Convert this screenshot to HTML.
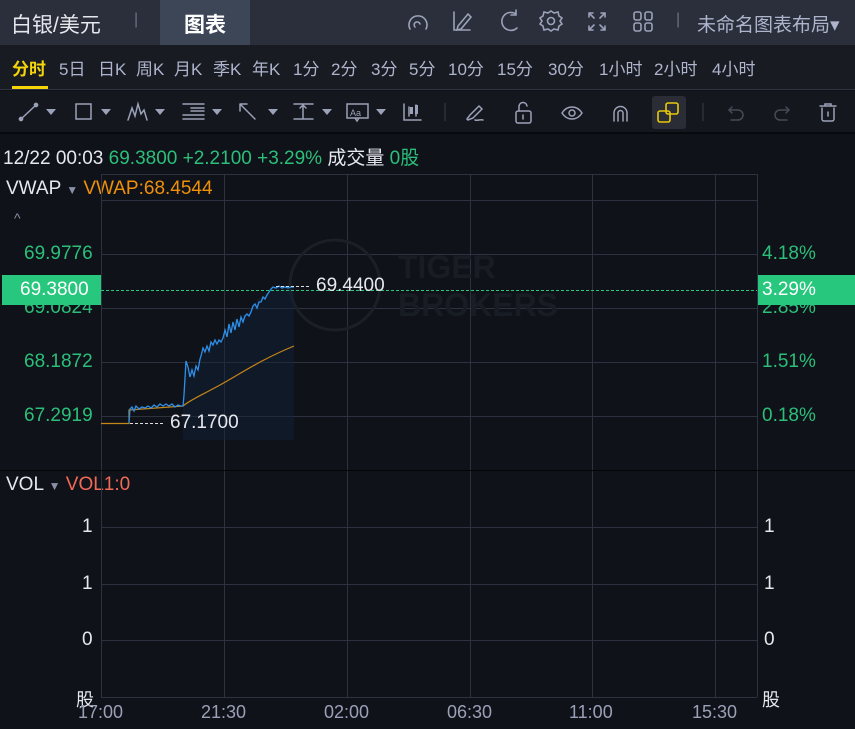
<!DOCTYPE html>
<html><head><meta charset="utf-8"><style>
*{margin:0;padding:0;box-sizing:border-box}
body{width:855px;height:729px;background:#0f1218;font-family:"Liberation Sans","Noto Sans CJK SC",sans-serif;position:relative;overflow:hidden;color:#c9ccd6}
.a{position:absolute;white-space:nowrap}
#top{position:absolute;left:0;top:0;width:855px;height:45px;background:#2a2f3b}
#tf{position:absolute;left:0;top:45px;width:855px;height:45px;background:#181b22;border-bottom:1px solid #2e3340}
#tb{position:absolute;left:0;top:91px;width:855px;height:43px;background:#14171d;border-bottom:2px solid #08090c}
.tf{top:55px;font-size:17px;color:#aeb4cc}
.g{color:#2bbf7a}
svg{position:absolute;left:0;top:0}
.y{font-size:19px}
</style></head><body>
<div id="top"></div>
<div class="a" style="left:160px;top:0;width:90px;height:45px;background:#3d4656"></div>
<div class="a" style="left:11px;top:9px;font-size:21px;color:#e6e8ee">白银/美元</div>
<div class="a" style="left:134px;top:11px;font-size:16px;color:#6b7080">|</div>
<div class="a" style="left:184px;top:9px;font-size:21px;font-weight:bold;color:#fff">图表</div>
<div class="a" style="left:676px;top:11px;font-size:16px;color:#6b7080">|</div>
<div class="a" style="left:697px;top:10px;font-size:19px;color:#aeb4cc">未命名图表布局▾</div>
<div id="tf"></div>
<div class="a tf" style="left:12px;color:#f5d50a;font-weight:bold">分时</div>
<div class="a" style="left:12px;top:86px;width:36px;height:3px;background:#f5d50a"></div>
<div class="a tf" style="left:59px">5日</div>
<div class="a tf" style="left:98px">日K</div>
<div class="a tf" style="left:136px">周K</div>
<div class="a tf" style="left:174px">月K</div>
<div class="a tf" style="left:213px">季K</div>
<div class="a tf" style="left:252px">年K</div>
<div class="a tf" style="left:293px">1分</div>
<div class="a tf" style="left:331px">2分</div>
<div class="a tf" style="left:371px">3分</div>
<div class="a tf" style="left:409px">5分</div>
<div class="a tf" style="left:448px">10分</div>
<div class="a tf" style="left:497px">15分</div>
<div class="a tf" style="left:548px">30分</div>
<div class="a tf" style="left:599px">1小时</div>
<div class="a tf" style="left:654px">2小时</div>
<div class="a tf" style="left:712px">4小时</div>
<div id="tb"></div>
<div class="a" style="left:652px;top:96px;width:34px;height:33px;background:#2a2d35;border-radius:3px"></div>
<div class="a" style="left:3px;top:143px;font-size:19px;color:#e6e8ee">12/22 00:03 <span class="g">69.3800 +2.2100 +3.29%</span> 成交量 <span class="g">0股</span></div>
<div class="a" style="left:6px;top:178px;font-size:19px;color:#e6e8ee">VWAP <span style="color:#8a90a6;font-size:12px">▼</span> <span style="color:#f0900a">VWAP:68.4544</span></div>
<div class="a" style="left:6px;top:474px;font-size:19px;color:#e6e8ee">VOL <span style="color:#8a90a6;font-size:12px">▼</span> <span style="color:#f06a55">VOL1:0</span></div>
<svg width="855" height="729">
<g fill="none" stroke="#9ba1b8" stroke-width="1.6" stroke-linecap="round">
<path d="M410 29a9 9 0 1 1 16 0M415 27a3 3 0 1 1 5-3"/>
<path d="M454 12v18h16M458 26l10-12 3 3-10 12-4 1z"/>
<path d="M516 14a9 9 0 1 0 1 14M516 10v5h-5"/>
<circle cx="551" cy="21" r="3.5"/><path d="M551 11l3 2 4-1 1 4 3 2-2 3 2 3-3 2-1 4-4-1-3 2-3-2-4 1-1-4-3-2 2-3-2-3 3-2 1-4 4 1z"/>
<path d="M589 13l5 5M589 13h4M589 13v4M605 13l-5 5M605 13h-4M605 13v4M589 30l5-5M589 30h4M589 30v-4M605 30l-5-5M605 30h-4M605 30v-4"/>
<rect x="634" y="12" width="7" height="8" rx="2"/><rect x="645" y="12" width="7" height="8" rx="2"/><rect x="634" y="23" width="7" height="8" rx="2"/><rect x="645" y="23" width="7" height="8" rx="2"/>
</g>
<g fill="none" stroke="#9ba1b8" stroke-width="1.5" stroke-linecap="round">
<path d="M21 119l15-14"/><circle cx="21" cy="119" r="1.6" fill="#9ba1b8"/><circle cx="36" cy="105" r="1.6" fill="#9ba1b8"/>
<rect x="76" y="104" width="15" height="15"/>
<path d="M128 120l4-12 3 8 3-12 3 10 3-4 3 10"/>
<path d="M183 104h21M191 108h13M191 111h13M183 115h21M183 119h21"/>
<path d="M240 104l15 15M240 104v7M240 104h7"/>
<path d="M294 104h19M303 104v15M294 119h19M300 108l3-3 3 3"/>
<rect x="347" y="104" width="21" height="14"/><path d="M355 118l2 3 2-3"/>
<path d="M404 104v16h17M409 107v9M416 105v11"/>
<path d="M467 119l3-4 9-9 3 3-9 9-5 2zM475 120c3 1 5-1 8 0"/>
<rect x="516" y="111" width="15" height="12" rx="2"/><path d="M519 111v-4a4 4 0 0 1 8-1M523 115v4"/>
<path d="M562 113c5-8 15-8 20 0c-5 8-15 8-20 0z"/><circle cx="572" cy="113" r="3"/>
<path d="M614 121v-8a6.5 6.5 0 0 1 13 0v8M618 121v-8a2.5 2.5 0 0 1 5 0v8"/>
<path d="M732 107l-3 3 3 3M729 110h9a5 5 0 0 1 0 10h-7" stroke="#454a57"/>
<path d="M786 107l3 3-3 3M789 110h-9a5 5 0 0 0 0 10h7" stroke="#454a57"/>
<path d="M820 106h16M825 106v-2h6v2M822 108v11a2 2 0 0 0 2 2h8a2 2 0 0 0 2-2v-11M828 112v4"/>
</g>
<g fill="#9ba1b8"><path d="M46 109h10l-5 6z"/><path d="M101 109h10l-5 6z"/><path d="M155 109h10l-5 6z"/><path d="M212 109h10l-5 6z"/><path d="M268 109h10l-5 6z"/><path d="M322 109h10l-5 6z"/><path d="M376 109h10l-5 6z"/></g>
<text x="350" y="116" font-size="9" fill="#9ba1b8" font-family="Liberation Sans">Aa</text>
<g fill="#9ba1b8"><rect x="410" y="107" width="3" height="7"/><rect x="415" y="105" width="3" height="9"/></g>
<path d="M445 103v18M703 103v18" stroke="#3a3e48"/>
<g fill="none" stroke="#e8c90a" stroke-width="1.6"><rect x="658" y="111" width="12" height="11" rx="2"/><rect x="666" y="103" width="12" height="11" rx="2"/></g>
<g stroke="#2c3240" stroke-width="1" fill="none">
<path d="M101.5 174v523M224.5 174v523M347.5 174v523M470.5 174v523M592.5 174v523M715.5 174v523M757.5 174v523"/>
<path d="M101 174.5h656M101 200.5h656M101 254.5h656M101 308.5h656M101 362.5h656M101 416.5h656"/>
<path d="M101 527.5h656M101 584.5h656M101 640.5h656M101 697.5h656"/>
</g>
<path d="M0 470.5h855" stroke="#050608"/>
<circle cx="335" cy="285" r="45" fill="none" stroke="#1b1f27" stroke-width="3"/>
<text x="398" y="278" font-size="32" font-weight="bold" fill="#181c24" font-family="Liberation Sans">TIGER</text>
<text x="398" y="316" font-size="32" font-weight="bold" fill="#181c24" font-family="Liberation Sans">BROKERS</text>
<path d="M183 406L186 362 189 370 192 365 196 374 200 362 203 351 206 355 209 345 213 340 216 344 220 339 224 342 226 332 229 320 232 328 235 316 238 323 241 316 245 313 248 311 252 306 256 302 258 298 262 298 265 294 268 294 270 290 272 287 276 287 280 288 284 286 288 287 294 287L294 440 183 440z" fill="#12243a" opacity="0.45"/>
<path d="M101 423.5H129V410L183 406C190 400 200 396 220 385S260 360 294 346" fill="none" stroke="#c5861a" stroke-width="1.2"/>
<path d="M129 423L130 409 132 407 134 411 136 406 139 409 142 407 145 408 148 406 151 408 154 405 157 407 160 404 163 406 166 404 169 406 172 404 175 407 178 405 181 406 183 406L184 395 186 361 188 367 190 377 192 370 194 376 196 366 198 370 200 359 201 356 203 348 205 352 207 346 209 351 211 342 213 345 215 340 217 344 219 340 221 342 223 338 225 330 227 337 229 324 231 333 233 322 235 330 237 319 239 327 241 317 243 322 245 316 247 314 249 316 251 312 253 306 255 304 257 308 259 302 261 302 263 297 265 299 267 295 269 292 271 289 273 287 276 288 279 286 282 288 285 287 288 288 291 287 294 287" fill="none" stroke="#2e8fe8" stroke-width="1.3"/>
<path d="M130 423.5h34M276 286.5h34" stroke="#ddd" stroke-dasharray="3 2"/>
<path d="M101 290.5h656" stroke="#2bc77e" stroke-dasharray="3 2"/>
</svg>
<div class="a y" style="left:170px;top:412px;color:#e6e8ee">67.1700</div>
<div class="a y" style="left:316px;top:275px;color:#e6e8ee">69.4400</div>
<div class="a" style="left:14px;top:210px;font-size:14px;color:#8a90a6">^</div>
<div class="a g y" style="left:24px;top:243px">69.9776</div>
<div class="a g y" style="left:24px;top:297px">69.0824</div>
<div class="a g y" style="left:24px;top:351px">68.1872</div>
<div class="a g y" style="left:24px;top:405px">67.2919</div>
<div class="a y" style="left:2px;top:275px;width:99px;height:30px;background:#28c77e;color:#fff;padding:4px 0 0 18px">69.3800</div>
<div class="a g y" style="left:762px;top:243px">4.18%</div>
<div class="a g y" style="left:762px;top:297px">2.85%</div>
<div class="a g y" style="left:762px;top:351px">1.51%</div>
<div class="a g y" style="left:762px;top:405px">0.18%</div>
<div class="a y" style="left:758px;top:275px;width:97px;height:30px;background:#28c77e;color:#fff;padding:4px 0 0 4px">3.29%</div>
<div class="a y" style="left:82px;top:516px;color:#e6e8ee">1</div>
<div class="a y" style="left:82px;top:573px;color:#e6e8ee">1</div>
<div class="a y" style="left:82px;top:629px;color:#e6e8ee">0</div>
<div class="a" style="left:76px;top:686px;font-size:18px;color:#e6e8ee">股</div>
<div class="a y" style="left:764px;top:516px;color:#e6e8ee">1</div>
<div class="a y" style="left:764px;top:573px;color:#e6e8ee">1</div>
<div class="a y" style="left:764px;top:629px;color:#e6e8ee">0</div>
<div class="a" style="left:762px;top:686px;font-size:18px;color:#e6e8ee">股</div>
<div class="a" style="left:78px;top:702px;font-size:18px;color:#9aa0b8">17:00</div>
<div class="a" style="left:201px;top:702px;font-size:18px;color:#9aa0b8">21:30</div>
<div class="a" style="left:324px;top:702px;font-size:18px;color:#9aa0b8">02:00</div>
<div class="a" style="left:447px;top:702px;font-size:18px;color:#9aa0b8">06:30</div>
<div class="a" style="left:569px;top:702px;font-size:18px;color:#9aa0b8">11:00</div>
<div class="a" style="left:692px;top:702px;font-size:18px;color:#9aa0b8">15:30</div>
</body></html>
